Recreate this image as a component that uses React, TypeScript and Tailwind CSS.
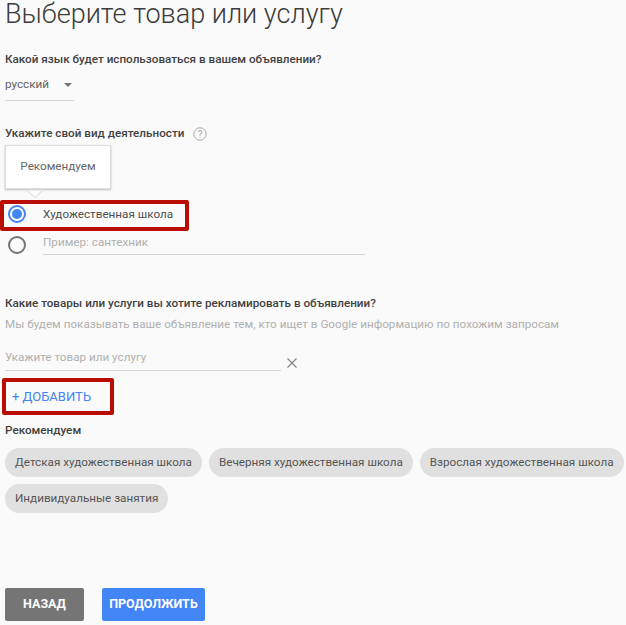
import { useState } from 'react';

const chips = [
  'Детская художественная школа',
  'Вечерняя художественная школа',
  'Взрослая художественная школа',
  'Индивидуальные занятия',
];

export default function App() {
  const [language] = useState('русский');

  return (
    <div className="w-[626px] h-[625px] overflow-hidden bg-[#fafafa] pl-[5px] font-['Roboto',sans-serif] text-[#424242]">
      <h1 className="h-[26px] text-[27px] leading-[28px] font-light text-[#3c3c3c]">
        Выберите товар или услугу
      </h1>

      <p className="mt-[25px] h-[16px] text-[11.7px] leading-[16px] font-medium">
        Какой язык будет использоваться в вашем объявлении?
      </p>
      <div className="mt-[9px] flex h-[25px] w-[69px] items-start border-b border-[#d6d6d6] text-[11.7px] leading-[16px] text-[#5f5f5f]">
        <span>{language}</span>
        <span className="ml-[15px] mt-[7px] h-0 w-0 border-x-[4px] border-t-[4px] border-x-transparent border-t-[#757575]" />
      </div>

      <div className="mt-[24px] flex h-[16px] items-center">
        <p className="text-[11.7px] leading-[16px] font-medium">Укажите свой вид деятельности</p>
        <svg className="ml-[9px] mt-[2px]" width="14" height="14" viewBox="0 0 14 14" fill="none">
          <circle cx="7" cy="7" r="6.2" stroke="#a8a8a8" strokeWidth="1" />
          <text x="7" y="10.6" textAnchor="middle" fontSize="10" fill="#a8a8a8" fontFamily="Roboto, sans-serif">?</text>
        </svg>
      </div>

      <div className="relative mt-[4px] h-[55px]">
        <div className="absolute left-[25px] top-[40px] h-[10px] w-[10px] rotate-45 bg-white shadow-[1px_1px_1px_rgba(0,0,0,0.12)]" />
        <div className="absolute left-0 top-0 flex h-[44px] w-[106px] items-center justify-center border border-[#dcdcdc] bg-white text-[11.7px] text-[#666] shadow-[0_1px_2px_rgba(0,0,0,0.25)]">
          Рекомендуем
        </div>
      </div>

      <div className="relative -ml-[5px] flex h-[31px] w-[189px] items-center rounded-[2px] border-[4px] border-[#b80d00] pb-[3px] pl-[4px]">
        <span className="flex h-[18px] w-[18px] items-center justify-center rounded-full border-2 border-[#4285f4]">
          <span className="h-[10px] w-[10px] rounded-full bg-[#4285f4]" />
        </span>
        <span className="ml-[17px] text-[11.7px] leading-[16px] text-[#505050]">Художественная школа</span>
      </div>

      <div className="flex h-[24px] items-start pl-[3px]">
        <span className="mt-[5px] h-[18px] w-[18px] rounded-full border-2 border-[#757575]" />
        <div className="ml-[17px] flex h-[24px] w-[322px] items-center border-b border-[#d6d6d6] text-[11.7px] text-[#b0b0b0]">
          Пример: сантехник
        </div>
      </div>

      <p className="mt-[40px] h-[16px] text-[11.7px] leading-[16px] font-medium">
        Какие товары или услуги вы хотите рекламировать в объявлении?
      </p>
      <p className="mt-[5px] h-[16px] text-[11.7px] leading-[16px] text-[#b0b0b0]">
        Мы будем показывать ваше объявление тем, кто ищет в Google информацию по похожим запросам
      </p>

      <div className="mt-[14px] flex items-end">
        <div className="h-[25px] w-[276px] border-b border-[#d6d6d6] pt-[3px] text-[11.7px] leading-[16px] text-[#b0b0b0]">
          Укажите товар или услугу
        </div>
        <svg className="ml-[5px] mb-[2px]" width="12" height="12" viewBox="0 0 12 12" fill="none">
          <path d="M1.5 1.5 L10.5 10.5 M10.5 1.5 L1.5 10.5" stroke="#808080" strokeWidth="1.1" />
        </svg>
      </div>

      <div className="-ml-[3px] mt-[7px] flex h-[37px] w-[112px] items-center rounded-[2px] border-[4px] border-[#b80d00] pl-[6px] pt-[1px] text-[13px] font-normal text-[#4285f4]">
        + ДОБАВИТЬ
      </div>

      <p className="mt-[7px] h-[16px] text-[11.7px] leading-[16px] font-medium">Рекомендуем</p>

      <div className="mt-[10px] flex w-[621px] flex-wrap gap-x-[7px] gap-y-[7px]">
        {chips.map((chip) => (
          <span key={chip} className="flex h-[29px] items-center whitespace-nowrap rounded-full bg-[#e0e0e0] px-[10px] text-[11.7px] text-[#555]">
            {chip}
          </span>
        ))}
      </div>

      <div className="mt-[75px] flex gap-[18px]">
        <button className="h-[33px] w-[79px] rounded-[2px] bg-[#757575] text-[12.5px] font-bold text-white">НАЗАД</button>
        <button className="h-[33px] w-[103px] rounded-[2px] bg-[#4285f4] text-[12.5px] font-bold text-white">ПРОДОЛЖИТЬ</button>
      </div>
    </div>
  );
}
